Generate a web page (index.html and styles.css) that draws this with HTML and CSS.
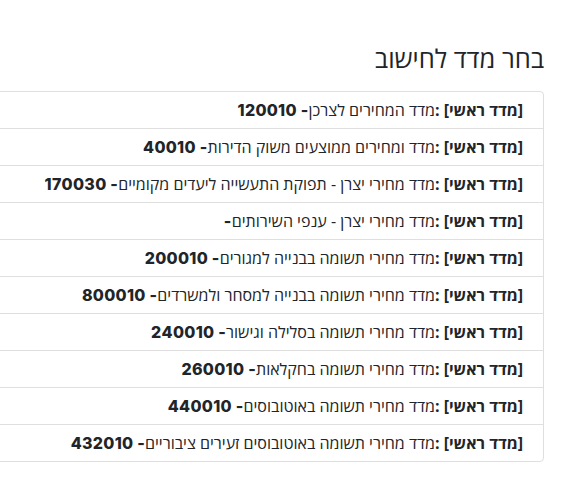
FILE: index.html
```html
<!DOCTYPE html>
<html lang="he" dir="rtl">
<head>
<meta charset="utf-8">
<title>בחר מדד לחישוב</title>
<link rel="stylesheet" href="styles.css">
</head>
<body>
<main class="page">
  <h4 class="title">בחר מדד לחישוב</h4>
  <ul class="list">
    <li class="item"><strong>[מדד ראשי] :</strong>מדד המחירים לצרכן<strong class="code">- 120010</strong></li>
    <li class="item"><strong>[מדד ראשי] :</strong>מדד ומחירים ממוצעים משוק הדירות<strong class="code">- 40010</strong></li>
    <li class="item"><strong>[מדד ראשי] :</strong>מדד מחירי יצרן - תפוקת התעשייה ליעדים מקומיים<strong class="code">- 170030</strong></li>
    <li class="item"><strong>[מדד ראשי] :</strong>מדד מחירי יצרן - ענפי השירותים<strong class="code">-</strong></li>
    <li class="item"><strong>[מדד ראשי] :</strong>מדד מחירי תשומה בבנייה למגורים<strong class="code">- 200010</strong></li>
    <li class="item"><strong>[מדד ראשי] :</strong>מדד מחירי תשומה בבנייה למסחר ולמשרדים<strong class="code">- 800010</strong></li>
    <li class="item"><strong>[מדד ראשי] :</strong>מדד מחירי תשומה בסלילה וגישור<strong class="code">- 240010</strong></li>
    <li class="item"><strong>[מדד ראשי] :</strong>מדד מחירי תשומה בחקלאות<strong class="code">- 260010</strong></li>
    <li class="item"><strong>[מדד ראשי] :</strong>מדד מחירי תשומה באוטובוסים<strong class="code">- 440010</strong></li>
    <li class="item"><strong>[מדד ראשי] :</strong>מדד מחירי תשומה באוטובוסים זעירים ציבוריים<strong class="code">- 432010</strong></li>
  </ul>
</main>
</body>
</html>
```

FILE: styles.css
```css
html, body {
  margin: 0;
  padding: 0;
  background: #fff;
  overflow: hidden;
}
body {
  font-family: "Open Sans", "DejaVu Sans", sans-serif;
  font-size: 16px;
  line-height: 1.5;
  color: #212529;
}
.page {
  padding: 43px 33px 0 0;
}
.title {
  margin: 0 0 17px 0;
  font-size: 25.5px;
  font-weight: 400;
  line-height: 1.2;
  padding-right: 0;
}
.list {
  list-style: none;
  margin: 0;
  padding: 0;
  width: 620px;
  border: 1px solid rgba(0, 0, 0, 0.125);
  border-radius: 4px;
}
.item {
  padding: 6px 20px;
  border-top: 1px solid rgba(0, 0, 0, 0.125);
  white-space: nowrap;
}
.item:first-child {
  border-top: 0;
}
.item strong {
  font-weight: 700;
}
.item .code {
  font-family: "Inter", "Open Sans", sans-serif;
  font-weight: 800;
  letter-spacing: 0.3px;
}
```
